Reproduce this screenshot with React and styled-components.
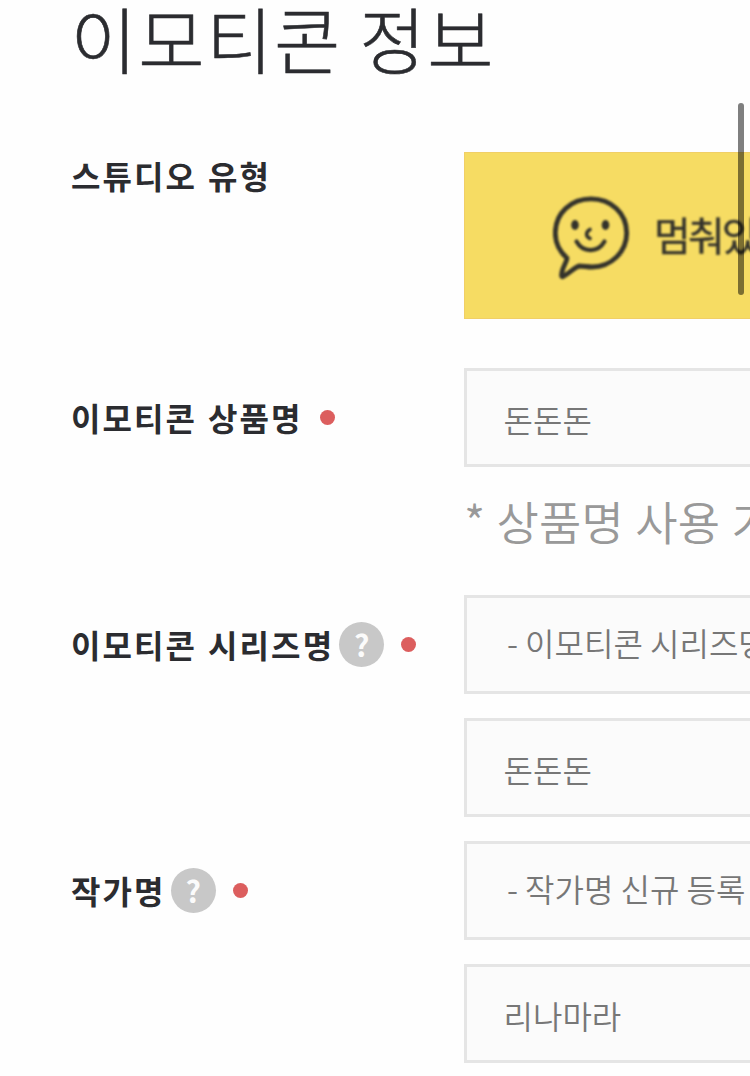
import React from "react";
import styled, { createGlobalStyle } from "styled-components";

export default function App() {
	return (
		<Page>
			<Global />
			<Title>이모티콘 정보</Title>
			<Form>
				<Row $gap={49}>
					<Label $top={5}>스튜디오 유형</Label>
					<Fields>
						<Banner>
							<FaceBubble />
							<BannerText>멈춰있는 이모티콘</BannerText>
						</Banner>
					</Fields>
				</Row>
				<Row $gap={44}>
					<Label $top={31}>이모티콘 상품명 <Required $left={17} /></Label>
					<Fields>
						<Field>돈돈돈</Field>
						<Hint>* 상품명 사용 가능 여부</Hint>
					</Fields>
				</Row>
				<Row $gap={24}>
					<Label $top={31}>이모티콘 시리즈명 <Help>?</Help><Required $left={17} /></Label>
					<Fields>
						<Field $select>- 이모티콘 시리즈명 신규 등록</Field>
						<Field>돈돈돈</Field>
					</Fields>
				</Row>
				<Row $gap={0}>
					<Label $top={31}>작가명 <Help>?</Help><Required $left={17} /></Label>
					<Fields>
						<Field $select>- 작가명 신규 등록</Field>
						<Field>리나마라</Field>
					</Fields>
				</Row>
			</Form>
			<ScrollThumb />
		</Page>
	);
}

function FaceBubble() {
	return (
		<Bubble viewBox="0 0 78 86" fill="none" stroke="#33322b" strokeWidth="4.8" strokeLinecap="round" strokeLinejoin="round">
			<path d="M14 63 C7 57 2.300 48 2.300 38 C2.300 18 18 3.800 38 3.800 C58 3.800 73.700 18 73.700 38 C73.700 57 58 72 39 72 C34 72 31 71 26 71 C21 73 15 79 10 81.500 C8 82.500 8.500 80 9 77 C10 71 14 67 14 63 Z" />
			<path d="M23.500 46.500 C30 58 45 58 51.500 46.500" strokeWidth="4.200" />
			<path d="M37 34.500 C32.500 37 32.500 41.500 37 43.500" strokeWidth="3.600" />
			<ellipse cx="22" cy="30" rx="3.800" ry="4.900" fill="#33322b" stroke="none" />
			<ellipse cx="52.500" cy="30" rx="3.800" ry="4.900" fill="#33322b" stroke="none" />
		</Bubble>
	)
}

const Global = createGlobalStyle`
	* {
		box-sizing: border-box;
	}

	body {
		margin: 0;
		background: #fefefe;
		font-family: "Noto Sans CJK KR", sans-serif;
	}
`

const Page = styled.main`
	position: relative;
	height: 1076px;
	overflow: hidden;
	white-space: nowrap;
`

const Title = styled.h1`
	margin: 0;
	padding: 1px 0 0 70.5px;
	font-size: 72px;
	font-weight: 300;
	line-height: 72px;
	letter-spacing: 1.6px;
	color: #2b2c30;
	-webkit-text-stroke: 0.6px #2b2c30;
`

const Form = styled.section`
	padding: 79px 0 0 71px;
`

const Row = styled.div`
	display: flex;
	margin-bottom: ${({ $gap }) => $gap}px;
`

const Label = styled.div`
	display: flex;
	flex: 0 0 393px;
	align-items: center;
	height: 36px;
	margin-top: ${({ $top }) => $top}px;
	font-size: 32px;
	font-weight: 700;
	line-height: 36px;
	letter-spacing: 2.1px;
	word-spacing: 1.5px;
	color: #2b2c30;
`

const Required = styled.i`
	width: 15px;
	height: 15px;
	margin-left: ${({ $left }) => $left}px;
	border-radius: 50%;
	background: #dc5e5e;
`

const Help = styled.span`
	width: 45px;
	height: 45px;
	margin: 1px 0 0 5px;
	border-radius: 50%;
	background: #c8c8c8;
	color: #fbfbfb;
	font-size: 30px;
	font-weight: 700;
	line-height: 45px;
	letter-spacing: 0;
	text-align: center;
`

const Fields = styled.div`
	display: flex;
	flex: 0 0 700px;
	flex-direction: column;
	gap: 24px;
`

const Banner = styled.div`
	display: flex;
	align-items: center;
	height: 167px;
	padding: 4px 0 0 88px;
	border: 1px solid #f1cf66;
	background: #f6dc63;
`

const Bubble = styled.svg`
	width: 78px;
	height: 86px;
	filter: blur(0.8px);
`

const BannerText = styled.span`
	margin: 0 0 7px 23px;
	font-size: 40px;
	line-height: 40px;
	letter-spacing: -2.9px;
	color: #33322b;
	-webkit-text-stroke: 0.4px #33322b;
	filter: blur(0.8px);
`

const Field = styled.div`
	height: 99px;
	padding: ${({ $select }) => $select ? "28px 0 0 40px" : "32px 0 0 36.5px"};
	border: 3px solid #e5e5e5;
	background: #fbfbfb;
	font-size: 32px;
	font-weight: 350;
	line-height: 32px;
	color: #777;
`

const Hint = styled.p`
	margin: 2px 0 4px;
	font-size: 46px;
	font-weight: 350;
	line-height: 54px;
	letter-spacing: 0.1px;
	word-spacing: 1px;
	color: #999;
`

const ScrollThumb = styled.div`
	position: absolute;
	top: 103px;
	right: 6px;
	width: 6px;
	height: 192px;
	border-radius: 3px;
	background: rgba(0, 0, 0, 0.5);
`
